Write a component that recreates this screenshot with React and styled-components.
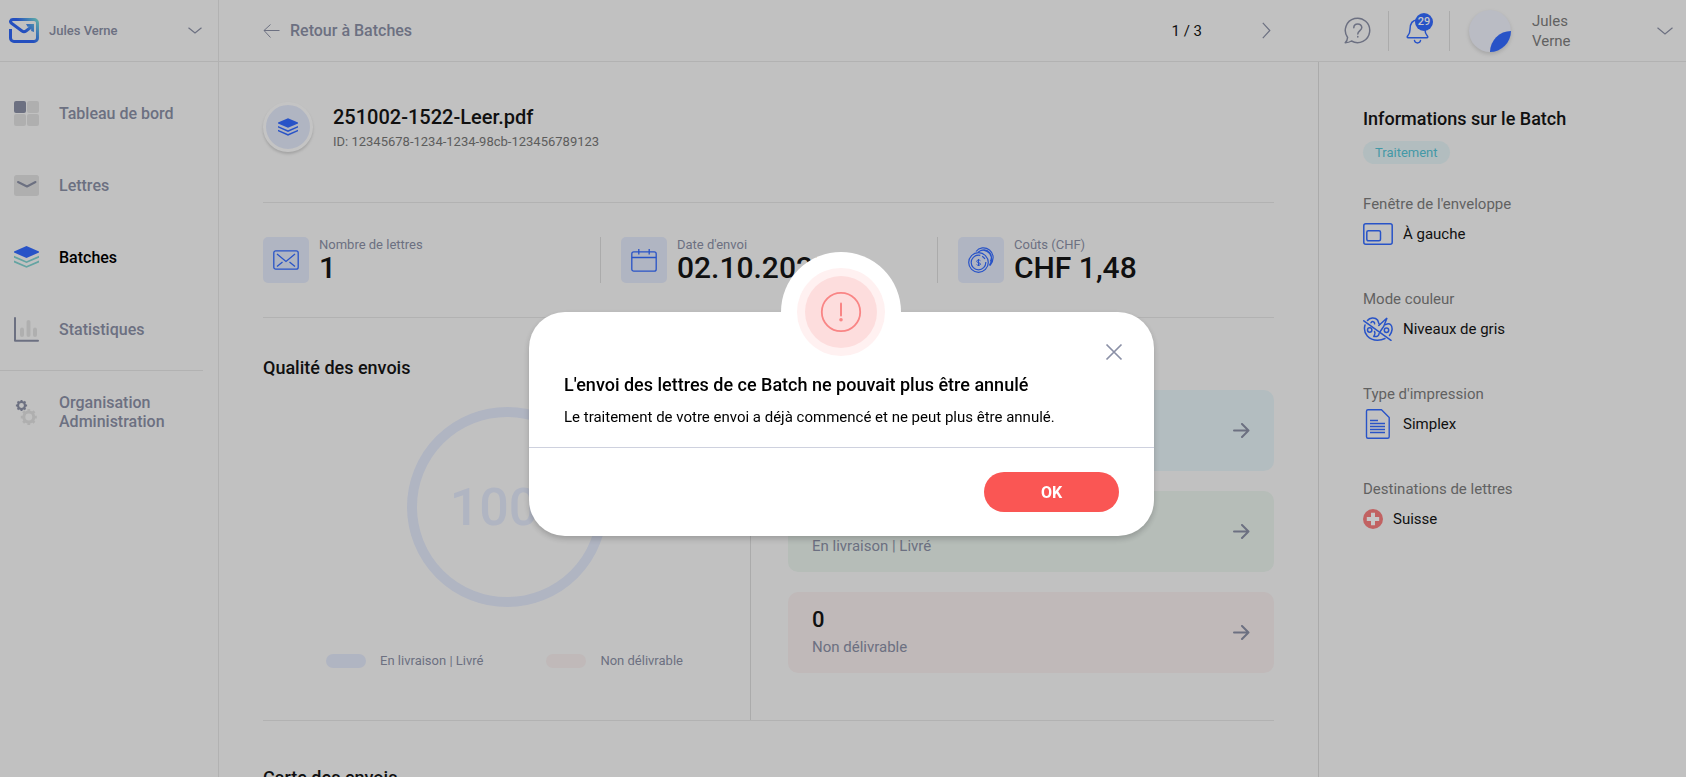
import { useState } from 'react'
import styled, { createGlobalStyle } from 'styled-components'

const GlobalStyle = createGlobalStyle`
  * {
    box-sizing: border-box;
  }

  body {
    margin: 0;
    overflow: hidden;
    background: #f8f8f8;
    color: #151515;
    font-family: Roboto, "Liberation Sans", sans-serif;
    font-size: 15px;
  }

  h1, h2, p, dl, dd, ul {
    margin: 0;
    padding: 0;
  }

  button {
    padding: 0;
    border: 0;
    background: none;
    font-family: inherit;
    cursor: pointer;
  }

  a {
    color: inherit;
    text-decoration: none;
  }

  svg {
    display: block;
    flex: none;
  }
`

const Page = styled.div`
  display: flex;
  height: 100vh;
  overflow: hidden;
`

const Sidebar = styled.aside`
  flex: none;
  width: 219px;
  border-right: 1px solid #e5e5e5;
`

const Account = styled.button`
  display: flex;
  align-items: center;
  width: 100%;
  height: 62px;
  padding: 0 16px 0 9px;
  border-bottom: 1px solid #e5e5e5;
  color: #8b90a6;
  font-size: 13px;
  font-weight: 500;

  span {
    flex: 1;
    margin-left: 10px;
    text-align: left;
  }
`

const Nav = styled.nav`
  margin-right: 15px;
  padding-top: 15px;
`

const NavItem = styled.a`
  display: flex;
  align-items: center;
  gap: 20px;
  height: 72px;
  padding-left: 14px;
  color: ${props => props.$active ? '#000' : '#8b90a6'};
  font-size: 16px;
  font-weight: 500;
  line-height: 19px;
`

const NavDivider = styled.div`
  height: 1px;
  margin: 5px 0;
  background: #e5e5e5;
`

const Right = styled.div`
  flex: 1;
  display: flex;
  flex-direction: column;
  min-width: 0;
`

const Header = styled.header`
  flex: none;
  display: flex;
  align-items: center;
  height: 62px;
  padding: 0 13px 0 44px;
  border-bottom: 1px solid #e5e5e5;
`

const Back = styled.a`
  display: flex;
  align-items: center;
  gap: 10px;
  color: #8b90a6;
  font-size: 16px;
  font-weight: 500;
`

const Pager = styled.div`
  display: flex;
  align-items: center;
  gap: 60px;
  margin-left: auto;
  margin-right: 56px;
`

const HeaderCell = styled.div`
  display: flex;
  align-items: center;
  height: 40px;
  padding: 0 17px;
  border-right: 1px solid #dcdcdc;
`

const Bell = styled.button`
  position: relative;
  width: 26px;
  height: 26px;
`

const Badge = styled.span`
  position: absolute;
  top: -5px;
  left: 9px;
  width: 18px;
  height: 18px;
  border-radius: 9px;
  background: #346bff;
  color: #fff;
  font-size: 11px;
  font-weight: 500;
  line-height: 18px;
  text-align: center;
`

const User = styled.button`
  display: flex;
  align-items: center;
  width: 204px;
  margin-left: 19px;
  color: #7d7d7d;
  font-size: 15px;
  line-height: 20px;
  text-align: left;

  span {
    flex: 1;
    margin: 0 64px 0 21px;
  }
`

const Avatar = styled.div`
  flex: none;
  width: 42px;
  height: 42px;
  border-radius: 50%;
  overflow: hidden;
  background: #eff1fb;
  box-shadow: 0 2px 4px rgba(0, 0, 0, 0.15);
`

const Columns = styled.div`
  flex: 1;
  display: flex;
  min-height: 0;
`

const Main = styled.main`
  flex: 1;
  min-width: 0;
  padding: 0 44px;
  overflow: hidden;
`

const Title = styled.section`
  display: flex;
  gap: 20px;
  height: 141px;
  padding-top: 40px;
  border-bottom: 1px solid #e5e5e5;
`

const Emblem = styled.div`
  display: flex;
  align-items: center;
  justify-content: center;
  width: 50px;
  height: 50px;
  border: 3px solid #fcfcfc;
  border-radius: 50%;
  background: #e2e8f9;
  box-shadow: 0 2px 3px rgba(0, 0, 0, 0.16);
`

const FileName = styled.h1`
  margin-top: 2px;
  font-size: 20px;
  font-weight: 500;
  line-height: 26px;
`

const FileId = styled.p`
  color: #777;
  font-size: 13px;
  line-height: 24px;
`

const Stats = styled.dl`
  display: grid;
  grid-template-columns: repeat(3, 1fr);
  padding: 34px 0;
  border-bottom: 1px solid #e5e5e5;
`

const Stat = styled.div`
  display: flex;
  gap: 10px;

  & + & {
    padding-left: 20px;
    border-left: 1px solid #dcdcdc;
  }
`

const StatIcon = styled.div`
  display: flex;
  align-items: center;
  justify-content: center;
  width: 46px;
  height: 46px;
  border-radius: 5px;
  background: #e2e8f9;
`

const StatText = styled.div`
  dt {
    color: #8b90a6;
    font-size: 13px;
    line-height: 15px;
  }

  dd {
    font-size: 30px;
    font-weight: 500;
    line-height: 31px;
  }
`

const Quality = styled.section`
  display: grid;
  grid-template-columns: 488fr 523fr;
  border-bottom: 1px solid #e5e5e5;
`

const QualityLeft = styled.div`
  padding-top: 40px;
  border-right: 1px solid #dcdcdc;
`

const Heading = styled.h2`
  font-size: 18px;
  font-weight: 500;
  line-height: 20px;
`

const Ring = styled.div`
  display: flex;
  align-items: center;
  justify-content: center;
  width: 200px;
  height: 200px;
  margin: 29px auto 0;
  border: 10px solid #e2e8f9;
  border-radius: 50%;
  color: #e2e8f9;
  font-size: 52px;
  font-weight: 500;

  small {
    font-size: 34px;
  }
`

const Legend = styled.ul`
  display: flex;
  justify-content: center;
  gap: 63px;
  margin: 46px 4px 0 0;
  list-style: none;
`

const LegendItem = styled.li`
  display: flex;
  align-items: center;
  gap: 14px;
  color: #8b90a6;
  font-size: 13px;
  line-height: 16px;

  &::before {
    content: '';
    width: 40px;
    height: 14px;
    border-radius: 7px;
    background: ${props => props.$color};
  }
`

const Cards = styled.div`
  display: flex;
  flex-direction: column;
  gap: 20px;
  padding: 72px 0 47px 37px;
`

const Card = styled.a`
  display: flex;
  align-items: center;
  justify-content: space-between;
  height: 81px;
  padding: 0 24px;
  border-radius: 10px;
  background: ${props => props.$color};
`

const Count = styled.p`
  font-size: 22px;
  font-weight: 500;
  line-height: 28px;
`

const CardLabel = styled.p`
  color: #8b90a6;
  line-height: 26px;
`

const MapSection = styled.section`
  padding-top: 47px;
`

const Info = styled.aside`
  flex: none;
  width: 368px;
  padding: 47px 44px;
  border-left: 1px solid #dcdcdc;
`

const Status = styled.span`
  display: inline-block;
  height: 23px;
  margin: 12px 0 30px;
  padding: 0 12px;
  border-radius: 12px;
  background: #e5f3f5;
  color: #58c4d6;
  font-size: 13px;
  line-height: 23px;
`

const Detail = styled.div`
  height: 95px;

  dt {
    color: #7d7d7d;
    line-height: 20px;
  }

  dd {
    display: flex;
    align-items: center;
    gap: 10px;
    height: 40px;
  }
`

const Overlay = styled.div`
  position: fixed;
  inset: 0;
  display: flex;
  align-items: center;
  justify-content: center;
  padding: 71px 3px 0 0;
  background: rgba(0, 0, 0, 0.22);
`

const Dialog = styled.div`
  position: relative;
  width: 625px;
  border-radius: 36px;
  background: #fff;
  box-shadow: 0 3px 6px rgba(0, 0, 0, 0.2);
  color: #000;
`

const Knob = styled.div`
  position: absolute;
  top: -60px;
  left: calc(50% - 61px);
  width: 120px;
  height: 120px;
  border-radius: 50%;
  background: #fff;
`

const Close = styled.button`
  position: absolute;
  top: 30px;
  right: 30px;
  padding: 1px;
`

const DialogBody = styled.div`
  padding: 63px 35px 20px;
  border-bottom: 1px solid #ced1de;

  p {
    margin-top: 12px;
    line-height: 20px;
  }
`

const DialogFooter = styled.div`
  display: flex;
  justify-content: flex-end;
  padding: 24px 35px;
`

const OkButton = styled.button`
  width: 135px;
  height: 40px;
  border-radius: 20px;
  background: #fa5654;
  color: #fff;
  font-size: 16px;
  font-weight: 700;
`

const BLUE = '#346bff'
const GREY = '#8b90a6'

const Logo = () => (
  <svg width="30" height="25" viewBox="0 0 30 25" fill="none">
    <defs>
      <linearGradient id="logo" x1="6" y1="18" x2="29" y2="1" gradientUnits="userSpaceOnUse">
        <stop offset="0.4" stopColor="#2f66f5" />
        <stop offset="1" stopColor="#7be0d6" />
      </linearGradient>
    </defs>
    <path d="M1.5 11v9a3.5 3.5 0 0 0 3.5 3.5h20a3.5 3.5 0 0 0 3.5-3.5V5A3.5 3.5 0 0 0 25 1.5H4C1.5 1.500.7 4 2.500 5.300L13 13q2 1.400 4 0l6.500-5" stroke="url(#logo)" strokeWidth="3" />
    <path d="M17 6h8v8l-2.800-1V8.800h-3.600z" fill="url(#logo)" />
  </svg>
)

const Chevron = ({ width = 14, height = 7 }) => (
  <svg width={width} height={height} viewBox={`0 0 ${width} ${height}`} fill="none" stroke={GREY} strokeWidth="1.200">
    <path d={`M.5.8L${width / 2} ${height - 1}L${width - 0.5}.8`} />
  </svg>
)

const DashboardIcon = () => (
  <svg width="25" height="25" viewBox="0 0 25 25" fill="#e1e1e1">
    <rect width="12" height="12" rx="2" fill={GREY} />
    <rect x="13" width="12" height="12" rx="2" />
    <rect y="13" width="12" height="12" rx="2" />
    <rect x="13" y="13" width="12" height="12" rx="2" />
  </svg>
)

const LetterIcon = () => (
  <svg width="25" height="21" viewBox="0 0 25 21" fill="none">
    <rect width="25" height="21" rx="2.500" fill="#e1e1e1" />
    <path d="M4 7l9 4.500L21.500 7" stroke={GREY} strokeWidth="2" strokeLinecap="round" strokeLinejoin="round" />
  </svg>
)

const LayersIcon = ({ width = 25, height = 22, second = BLUE }) => (
  <svg width={width} height={height} viewBox="0 0 25 22">
    <path d="M12.500 0L25 5.500v1L12.500 12 0 6.500v-1z" fill={BLUE} />
    <path d="M0 9.800l12.500 5.400L25 9.800v1.900l-12.500 5.400L0 11.700zM0 14.500l12.500 5.400L25 14.500v1.900l-12.500 5.400L0 16.400z" fill={second} />
  </svg>
)

const StatsIcon = () => (
  <svg width="25" height="25" viewBox="0 0 25 25" fill="none" strokeLinecap="round">
    <path d="M1 1v22.800h23" stroke={GREY} strokeWidth="2" strokeLinejoin="round" />
    <path d="M8 12.500v5.500M14.500 5v13M21 12.500v5.500" stroke="#e1e1e1" strokeWidth="4" />
  </svg>
)

const Gear = ({ x, y, r, color }) => (
  <g transform={`translate(${x} ${y})`} stroke={color} fill="none">
    <circle r={r} strokeWidth={r * 0.62} />
    {[0, 45, 90, 135].map(angle => (
      <path key={angle} d={`M0 ${-r * 1.6}V${-r}M0 ${r}V${r * 1.6}`} strokeWidth={r * 0.55} transform={`rotate(${angle})`} />
    ))}
  </g>
)

const GearsIcon = () => (
  <svg width="25" height="25" viewBox="0 0 25 25">
    <Gear x={7.5} y={5.5} r={3.5} color={GREY} />
    <Gear x={14.8} y={17} r={5} color="#e1e1e1" />
  </svg>
)

const BackArrow = () => (
  <svg width="17" height="14" viewBox="0 0 17 14" fill="none" stroke={GREY}>
    <path d="M16.500 6.500H1M7.500.5L1 6.500l6.500 7" />
  </svg>
)

const NextIcon = () => (
  <svg width="9" height="17" viewBox="0 0 9 17" fill="none" stroke={GREY} strokeWidth="1.200">
    <path d="M.8.8L7.800 8.500l-7 7.700" />
  </svg>
)

const HelpIcon = () => (
  <svg width="27" height="27" viewBox="0 0 27 27" fill="none" stroke={GREY} strokeWidth="1.500" strokeLinejoin="round" strokeLinecap="round">
    <path d="M3.600 20.500A12.200 12.200 0 1 1 7.500 24Q5 25.700 1.200 25.700q2.200-2.200 2.400-5.200z" />
    <path d="M9.800 10.700c0-5 8-5 8-.2 0 3-4 3.200-4 6.500" />
    <path d="M13.800 19.500v.4" strokeWidth="1.600" />
  </svg>
)

const BellIcon = () => (
  <svg width="24" height="26" viewBox="0 0 24 26" fill="none" stroke={BLUE} strokeWidth="1.500" strokeLinecap="round" strokeLinejoin="round">
    <path d="M11.500 2C6 2 4 6 4 11.500c0 3.500-.8 4.800-2.200 6.300-1 1.200-.6 1.900.4 1.900h18.600c1 0 1.400-.8.4-1.900-1.400-1.500-2.200-2.800-2.200-6.300" />
    <path d="M8.500 22.500c.5 3.200 5.500 3.200 6 0" />
  </svg>
)

const EnvelopeIcon = () => (
  <svg width="26" height="20" viewBox="0 0 26 20" fill="none" stroke={BLUE} strokeWidth="1.300">
    <rect x=".8" y=".8" width="24.400" height="18.400" rx="2" />
    <path d="M4 4l9 7.500L22 4M4 16.500l5.500-4.500M22 16.500L16.500 12" />
  </svg>
)

const CalendarIcon = () => (
  <svg width="26" height="23" viewBox="0 0 26 23" fill="none" stroke={BLUE} strokeWidth="1.300">
    <rect x=".8" y="2.800" width="24.400" height="19.400" rx="2" />
    <path d="M.8 8.500h24.400M7.800 0v5.500M18.200 0v5.500" />
  </svg>
)

const CoinsIcon = () => (
  <svg width="26" height="26" viewBox="0 0 26 26" fill="none" stroke={BLUE} strokeWidth="1.200">
    <circle cx="10.500" cy="15.500" r="9.800" />
    <circle cx="10.500" cy="15.500" r="7.300" strokeDasharray="36 2 4 3" />
    <path d="M8 4.500C11 .5 17-.5 21.500 3c5 4 4.500 11 .5 15.500M10 5.300c4-3.600 9-2 11.500 1.200 3 4 2.500 8-.2 12M12.500 3.500c8-3 13 5 9.800 11" />
    <path d="M12.400 13.700c-.8-1-3.700-1-3.700.6 0 1.800 3.800 1 3.800 2.800 0 1.600-3.200 1.600-3.900.4M10.500 12v7" strokeWidth="1" />
  </svg>
)

const ArrowIcon = () => (
  <svg width="17" height="15" viewBox="0 0 17 15" fill="none" stroke={GREY} strokeWidth="2" strokeLinecap="round" strokeLinejoin="round">
    <path d="M1 7.500h14.500M9 1l6.500 6.500L9 14" />
  </svg>
)

const WindowIcon = () => (
  <svg width="30" height="22" viewBox="0 0 30 22" fill="none" stroke={BLUE} strokeWidth="1.500">
    <rect x=".8" y=".8" width="28.400" height="20.400" rx="2" />
    <rect x="3.800" y="7.800" width="13.700" height="10" rx="1.500" />
  </svg>
)

const PaletteIcon = () => (
  <svg width="30" height="24" viewBox="0 0 30 24" fill="none" stroke={BLUE} strokeWidth="1.500" strokeLinecap="round">
    <path d="M.8 3.800L28 23.300" />
    <path d="M4.500 3.500C6.500.5 12-.2 14.500 3c1 1.500.8 3.200 2 4.500M2 8c-2.500 9 4.500 15.200 12.500 15.200 3 0 5.500-.7 7.500-1.700M26.500 18.500C29.500 15 30 10 27.500 7.500c-1.500-1.300-3.200-.8-5 .2" />
    <path d="M15.800 8.500L24 1l-3.300 8.500-3.500 5" />
    <circle cx="6.700" cy="13" r="2.200" />
    <circle cx="23.500" cy="13.300" r="2.200" />
    <path d="M8 5.800c.8-2 4-1.300 3.600 1M11.500 14.500c1.500 2.500-.3 3.500-.6 5 3 .5 5.200-.7 5.200-3" />
  </svg>
)

const DocumentIcon = () => (
  <svg width="30" height="30" viewBox="0 0 30 30" fill="none" stroke={BLUE} strokeWidth="1.400" strokeLinejoin="round">
    <path d="M5 .8h13.500L26.200 8.500V27.700a1.500 1.500 0 0 1-1.500 1.500H5a1.500 1.500 0 0 1-1.500-1.500V2.300A1.500 1.500 0 0 1 5 .8z" />
    <path d="M7 11.500h8M7 14.500h15M7 17.500h15M7 20.500h15M7 23.500h15" />
  </svg>
)

const SwissIcon = () => (
  <svg width="20" height="20" viewBox="0 0 20 20">
    <circle cx="10" cy="10" r="10" fill="#f87e7e" />
    <path d="M8 3.800h4V8h4.200v4H12v4.200H8V12H3.800V8H8z" fill="#fff" />
  </svg>
)

const AlertIcon = () => (
  <svg width="120" height="120" viewBox="0 0 120 120" fill="none">
    <circle cx="60" cy="60" r="44" fill="#fff1f1" />
    <circle cx="60" cy="60" r="36" fill="#fddddd" />
    <circle cx="60" cy="60" r="19.200" stroke="#f98585" strokeWidth="1.800" />
    <path d="M60 51.500v12" stroke="#f98585" strokeWidth="2" strokeLinecap="round" />
    <circle cx="60" cy="67.700" r="1.800" fill="#f98585" />
  </svg>
)

const CloseIcon = () => (
  <svg width="18" height="18" viewBox="0 0 18 18" fill="none" stroke={GREY} strokeWidth="1.700">
    <path d="M1.500 1.500l15 15M16.500 1.500l-15 15" />
  </svg>
)

const nav = [
  { name: 'Tableau de bord', icon: <DashboardIcon /> },
  { name: 'Lettres', icon: <LetterIcon /> },
  { name: 'Batches', icon: <LayersIcon second="#80d2d0" />, active: true },
  { name: 'Statistiques', icon: <StatsIcon /> }
]

const stats = [
  { label: 'Nombre de lettres', value: '1', icon: <EnvelopeIcon /> },
  { label: "Date d'envoi", value: '02.10.2025', icon: <CalendarIcon /> },
  { label: 'Coûts (CHF)', value: 'CHF 1,48', icon: <CoinsIcon /> }
]

const cards = [
  { label: 'Traitement', value: 1, color: '#e6f2f6' },
  { label: 'En livraison | Livré', value: 0, color: '#e9f2ec' },
  { label: 'Non délivrable', value: 0, color: '#f6eded' }
]

const details = [
  { label: "Fenêtre de l'enveloppe", value: 'À gauche', icon: <WindowIcon /> },
  { label: 'Mode couleur', value: 'Niveaux de gris', icon: <PaletteIcon /> },
  { label: "Type d'impression", value: 'Simplex', icon: <DocumentIcon /> },
  { label: 'Destinations de lettres', value: 'Suisse', icon: <SwissIcon /> }
]

const App = () => {
  const [open, setOpen] = useState(true)

  return (
    <>
      <GlobalStyle />
      <Page>
        <Sidebar>
          <Account>
            <Logo />
            <span>Jules Verne</span>
            <Chevron />
          </Account>
          <Nav>
            {nav.map(item => (
              <NavItem key={item.name} href="#" $active={item.active}>
                {item.icon}
                {item.name}
              </NavItem>
            ))}
            <NavDivider />
            <NavItem href="#">
              <GearsIcon />
              <span>Organisation<br />Administration</span>
            </NavItem>
          </Nav>
        </Sidebar>

        <Right>
          <Header>
            <Back href="#"><BackArrow />Retour à Batches</Back>
            <Pager>
              <span>1 / 3</span>
              <button aria-label="Suivant"><NextIcon /></button>
            </Pager>
            <HeaderCell>
              <button aria-label="Aide"><HelpIcon /></button>
            </HeaderCell>
            <HeaderCell>
              <Bell aria-label="Notifications">
                <BellIcon />
                <Badge>29</Badge>
              </Bell>
            </HeaderCell>
            <User>
              <Avatar>
                <svg width="42" height="42" viewBox="0 0 42 42">
                  <path d="M42 21A21 21 0 0 0 21 42H42z" fill={BLUE} />
                </svg>
              </Avatar>
              <span>Jules Verne</span>
              <Chevron width={16} height={8} />
            </User>
          </Header>

          <Columns>
            <Main>
              <Title>
                <Emblem><LayersIcon width={20} height={18} /></Emblem>
                <div>
                  <FileName>251002-1522-Leer.pdf</FileName>
                  <FileId>ID: 12345678-1234-1234-98cb-123456789123</FileId>
                </div>
              </Title>

              <Stats>
                {stats.map(stat => (
                  <Stat key={stat.label}>
                    <StatIcon>{stat.icon}</StatIcon>
                    <StatText>
                      <dt>{stat.label}</dt>
                      <dd>{stat.value}</dd>
                    </StatText>
                  </Stat>
                ))}
              </Stats>

              <Quality>
                <QualityLeft>
                  <Heading>Qualité des envois</Heading>
                  <Ring><span>100<small>%</small></span></Ring>
                  <Legend>
                    <LegendItem $color="#e2e8f9">En livraison | Livré</LegendItem>
                    <LegendItem $color="#f6eded">Non délivrable</LegendItem>
                  </Legend>
                </QualityLeft>
                <Cards>
                  {cards.map(card => (
                    <Card key={card.label} href="#" $color={card.color}>
                      <div>
                        <Count>{card.value}</Count>
                        <CardLabel>{card.label}</CardLabel>
                      </div>
                      <ArrowIcon />
                    </Card>
                  ))}
                </Cards>
              </Quality>

              <MapSection>
                <Heading>Carte des envois</Heading>
              </MapSection>
            </Main>

            <Info>
              <Heading>Informations sur le Batch</Heading>
              <Status>Traitement</Status>
              <dl>
                {details.map(item => (
                  <Detail key={item.label}>
                    <dt>{item.label}</dt>
                    <dd>{item.icon}{item.value}</dd>
                  </Detail>
                ))}
              </dl>
            </Info>
          </Columns>
        </Right>
      </Page>

      {open && (
        <Overlay>
          <Dialog role="dialog" aria-modal="true" aria-labelledby="dialog-title">
            <Knob><AlertIcon /></Knob>
            <Close aria-label="Fermer" onClick={() => setOpen(false)}><CloseIcon /></Close>
            <DialogBody>
              <Heading id="dialog-title">L'envoi des lettres de ce Batch ne pouvait plus être annulé</Heading>
              <p>Le traitement de votre envoi a déjà commencé et ne peut plus être annulé.</p>
            </DialogBody>
            <DialogFooter>
              <OkButton onClick={() => setOpen(false)}>OK</OkButton>
            </DialogFooter>
          </Dialog>
        </Overlay>
      )}
    </>
  )
}

export default App
